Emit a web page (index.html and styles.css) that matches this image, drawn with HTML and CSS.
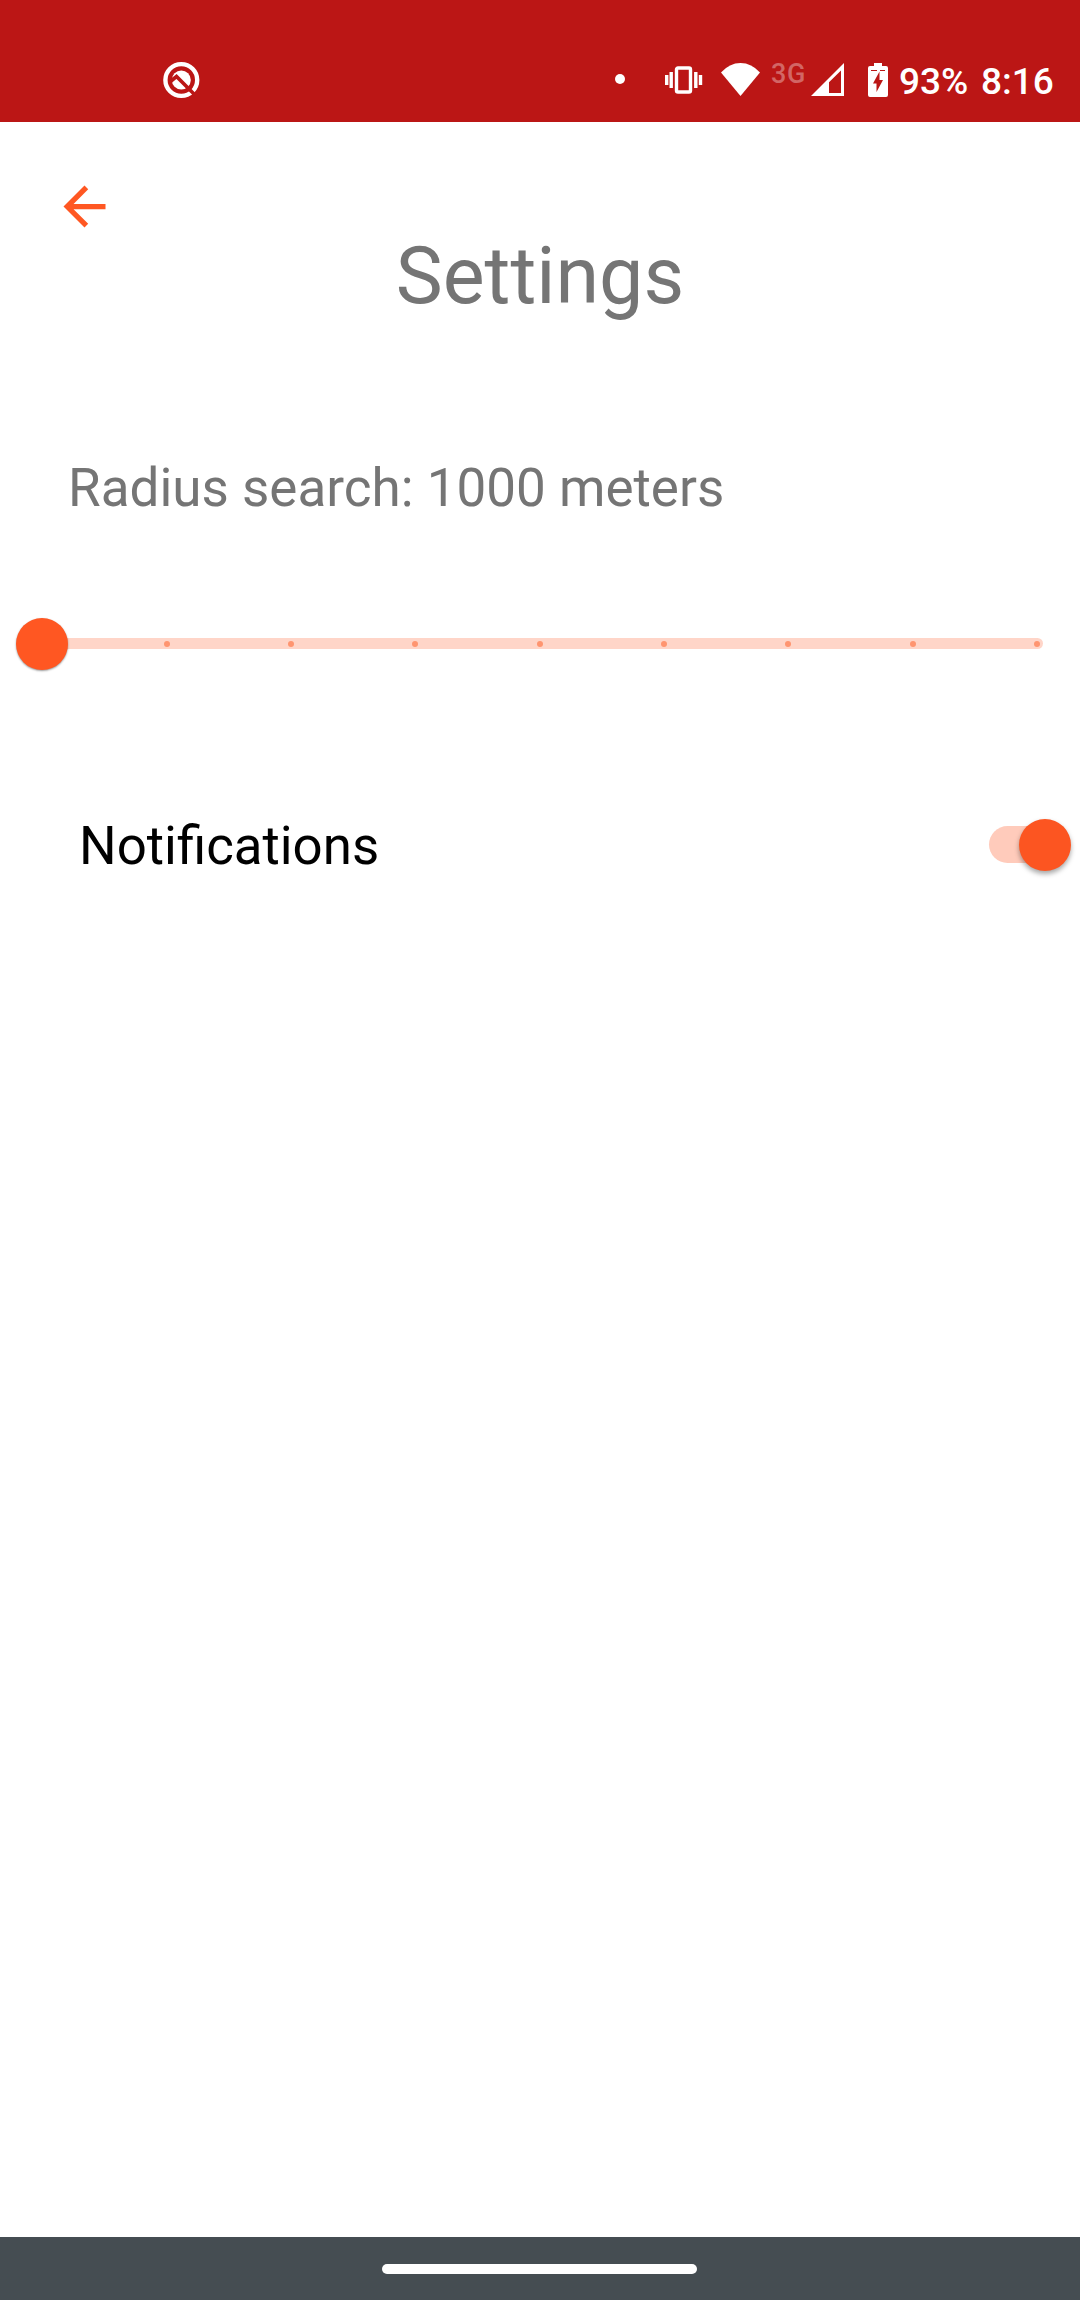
FILE: index.html
```html
<!DOCTYPE html>
<html lang="en">
<head>
<meta charset="utf-8">
<title>Settings</title>
<link rel="stylesheet" href="styles.css">
</head>
<body>
<header class="status-bar">
  <svg class="icon-app" width="38" height="38" viewBox="0 0 38 38">
    <circle cx="19.300" cy="19" r="15.900" fill="none" stroke="#fff" stroke-width="4.400"/>
    <circle cx="19.300" cy="19" r="9.500" fill="#fff"/>
    <path d="M9 20L14.500 15.500L32 33" fill="none" stroke="#bb1615" stroke-width="3.600"/>
  </svg>
  <div class="status-right">
    <span class="dot"></span>
    <svg class="icon-vibrate" width="38" height="28" viewBox="0 0 38 28">
      <rect x="11.500" y="2" width="14" height="24" rx="1.500" fill="none" stroke="#fff" stroke-width="3.400"/>
      <path d="M1.700 9v10M6.200 6v16M30.800 6v16M35.500 9v10" stroke="#fff" stroke-width="3.400"/>
    </svg>
    <svg class="icon-wifi" width="39" height="33" viewBox="0 0 39 33">
      <path d="M0 9.500Q8.500 0 19.500 0T39 9.500L19.500 33Z" fill="#fff"/>
    </svg>
    <span class="network">3G</span>
    <svg class="icon-signal" width="33" height="33" viewBox="0 0 33 33">
      <path fill-rule="evenodd" d="M0 33L33 0V33ZM18 19.300V30H30V7.500Z" fill="#fff"/>
    </svg>
    <svg class="icon-battery" width="20" height="34" viewBox="0 0 20 34">
      <path d="M6 0h8v3h4q2 0 2 2v27q0 2-2 2H2q-2 0-2-2V5q0-2 2-2h4Z" fill="#fff"/>
      <path d="M3 7h6v1H3zM12 7h5v1h-5zM11.500 8.500V17H15L8.500 29V20.500H5Z" fill="#bb1615"/>
    </svg>
    <span class="battery-level">93%</span>
    <span class="clock">8:16</span>
  </div>
</header>
<main class="content">
  <svg class="back" width="63" height="63" viewBox="0 0 24 24">
    <path d="M20 11H7.830l5.590-5.590L12 4l-8 8 8 8 1.410-1.410L7.830 13H20z" fill="#ff5722"/>
  </svg>
  <h1 class="title">Settings</h1>
  <p class="radius-label">Radius search: 1000 meters</p>
  <div class="slider">
    <span class="thumb slider-thumb"></span>
    <span class="tick"></span><span class="tick"></span><span class="tick"></span><span class="tick"></span>
    <span class="tick"></span><span class="tick"></span><span class="tick"></span><span class="tick"></span>
  </div>
  <div class="setting">
    <span>Notifications</span>
    <span class="switch"><span class="thumb switch-thumb"></span></span>
  </div>
</main>
<footer class="nav-bar"><span class="handle"></span></footer>
</body>
</html>
```
FILE: styles.css
```css
* { box-sizing: border-box; }
body {
  margin: 0;
  width: 1080px;
  height: 2300px;
  display: flex;
  flex-direction: column;
  background: #fff;
  font-family: Roboto, "Liberation Sans", sans-serif;
  overflow: hidden;
}
svg { display: block; flex: none; }

.status-bar {
  height: 122px;
  flex: none;
  display: flex;
  justify-content: space-between;
  align-items: flex-start;
  padding: 61px 26px 0 162px;
  background: #bb1615;
  color: #fff;
}
.status-right { display: flex; align-items: flex-start; }
.dot { width: 10px; height: 10px; margin: 13px 40px 0 0; border-radius: 50%; background: #fff; }
.icon-vibrate { margin: 5px 18px 0 0; }
.icon-wifi { margin: 2px 11px 0 0; }
.network { width: 35px; margin-right: 5px; font-size: 27px; line-height: 27px; font-weight: 500; letter-spacing: 0.7px; color: rgba(255,255,255,.35); }
.icon-signal { margin: 2px 24px 0 0; }
.icon-battery { margin: 2px 11px 0 0; }
.battery-level, .clock { font-size: 37px; line-height: 41px; font-weight: 500; }
.battery-level { width: 82px; }
.clock { width: 73px; }

.content { flex: 1; display: flex; flex-direction: column; }
.back { margin: 53px 0 0 53px; }
.title { margin: -8px 0 0; text-align: center; font-size: 79px; line-height: 92px; font-weight: 400; color: #757575; }
.radius-label { margin: 135px 0 0 68px; font-size: 53px; line-height: 62px; color: #757575; }

.thumb { display: block; flex: none; width: 52px; height: 52px; border-radius: 50%; background: #ff5722; }
.slider {
  display: flex;
  align-items: center;
  height: 11px;
  width: 1006px;
  margin: 119px 0 0 37px;
  border-radius: 5.5px;
  background: #ffd5c8;
}
.slider-thumb { margin: 0 95.5px 0 -21px; box-shadow: 0 1px 2px rgba(0,0,0,.4); }
.tick { width: 6px; height: 6px; margin-right: 118.4px; flex: none; border-radius: 50%; background: #ff9570; }
.tick:last-child { margin-right: 0; }

.setting {
  display: flex;
  justify-content: space-between;
  align-items: flex-start;
  height: 62px;
  margin: 166px 10px 0 79px;
  font-size: 52.8px;
  line-height: 62px;
  color: #000;
}
.switch { display: flex; align-items: center; justify-content: flex-end; width: 82px; height: 37px; margin-top: 11px; border-radius: 18.5px; background: #ffcbbb; }
.switch { width: 81.5px; }
.switch-thumb { margin-right: -0.5px; background: #fc5521; box-shadow: 0 3px 5px rgba(0,0,0,.35); }

.nav-bar { height: 63px; flex: none; display: flex; justify-content: center; padding: 27px 1px 0 0; background: #454d52; }
.handle { width: 315px; height: 10px; border-radius: 5px; background: #fff; }
```
